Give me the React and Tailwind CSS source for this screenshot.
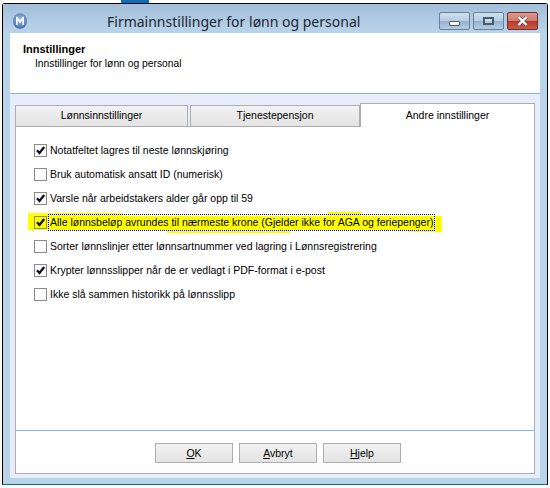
const options = [
  { label: 'Notatfeltet lagres til neste lønnskjøring', checked: true },
  { label: 'Bruk automatisk ansatt ID (numerisk)', checked: false },
  { label: 'Varsle når arbeidstakers alder går opp til 59', checked: true },
  { label: 'Alle lønnsbeløp avrundes til nærmeste krone (Gjelder ikke for AGA og feriepenger)', checked: true, marked: true },
  { label: 'Sorter lønnslinjer etter lønnsartnummer ved lagring i Lønnsregistrering', checked: false },
  { label: 'Krypter lønnsslipper når de er vedlagt i PDF-format i e-post', checked: true },
  { label: 'Ikke slå sammen historikk på lønnsslipp', checked: false },
];

function Logo() {
  return (
    <svg width="14" height="16" viewBox="0 0 14 16" className="shrink-0">
      <defs>
        <radialGradient id="orb" cx="50%" cy="40%" r="65%">
          <stop offset="0%" stopColor="#9db6dc" />
          <stop offset="75%" stopColor="#5a7fb8" />
          <stop offset="100%" stopColor="#2a4684" />
        </radialGradient>
      </defs>
      <ellipse cx="7" cy="8" rx="7" ry="7.8" fill="url(#orb)" />
      <path d="M3 12V3.8h1.7L7 7.2l2.3-3.4H11V12H9.3V7.4L7 10.4 4.7 7.4V12z" fill="#f2f6fc" />
    </svg>
  );
}

// the marker stroke over the fourth row is not a clean rectangle
function Highlight() {
  return (
    <>
      <div className="absolute left-[-6px] top-[6px] w-[414px] h-[14px] bg-[#ffff00]" />
      <div className="absolute left-[-6px] top-[3px] w-[95px] h-[16px] bg-[#ffff00]" />
      <div className="absolute left-[294px] top-[2px] w-[34px] h-[8px] bg-[#ffff00]" />
      <div className="absolute left-[133px] top-[16px] w-[123px] h-[7px] bg-[#ffff00]" />
      <div className="absolute left-[374px] top-[16px] w-[34px] h-[6px] bg-[#ffff00]" />
    </>
  );
}

function CheckRow({ label, checked, marked }) {
  return (
    <div className="h-6 flex items-center relative">
      {marked && <Highlight />}
      <span className={`relative w-[13px] h-[13px] shrink-0 border border-[#8a8a8a] flex items-center justify-center ${marked ? '' : 'bg-white'}`}>
        {checked && (
          <svg width="11" height="11" viewBox="0 0 11 11">
            <path d="M2 5.2l2.5 2.8L9.2 2" fill="none" stroke="#10141f" strokeWidth="2.4" />
          </svg>
        )}
      </span>
      <span className={`relative ml-[1px] px-[2px] h-[17px] leading-[17px] whitespace-nowrap ${marked ? 'outline-1 outline-dotted outline-offset-[-1px] outline-black' : ''}`}>
        {label}
      </span>
    </div>
  );
}

function CaptionButton({ className, children }) {
  return (
    <div className={`w-[31px] h-[18px] rounded-[2px] border flex items-center justify-center ${className}`}>
      {children}
    </div>
  );
}

function DialogButton({ hot, rest }) {
  return (
    <button className="w-[78px] h-5 border border-[#adadad] bg-gradient-to-b from-[#f2f2f2] to-[#e3e3e3] text-black leading-none">
      <span className="underline">{hot}</span>{rest}
    </button>
  );
}

export default function App() {
  const blueCaption = 'border-[#66809c] bg-[linear-gradient(#d0e0ef_0%,#b7cde2_48%,#96b3cf_52%,#b4cce2_100%)]';
  return (
    <div className="w-[550px] h-[488px] bg-white overflow-hidden relative text-[10.5px] text-black font-['Liberation_Sans',sans-serif]">
      {/* bits of the desktop behind the window */}
      <div className="absolute left-[121px] top-0 w-[28px] h-[3px] bg-[#0f6cb8]" />
      <div className="absolute left-0 top-0 w-[2px] h-[488px] bg-[#faf7ee]" />

      <div className="absolute left-[2px] top-[3px] w-[546px] h-[482px] border border-black border-b-[#0b6f78] rounded-t-[3px] bg-[#b9d3ea] flex flex-col">
        <div className="h-[29px] shrink-0 flex items-start pt-[9px] pl-[10px] pr-[9px] bg-gradient-to-b from-[#a3bfd9] to-[#b9d3ea]">
          <Logo />
          <div className="ml-[80px] mt-[-1px] text-[14px] leading-[20px] whitespace-nowrap text-[#1c2733] font-['Noto_Sans',sans-serif]">
            Firmainnstillinger for lønn og personal
          </div>
          <div className="ml-auto mt-[-1px] flex gap-[3px]">
            <CaptionButton className={blueCaption}>
              <div className="w-[11px] h-[5px] mt-[5px] bg-white border border-[#4a5a6c] rounded-[1px]" />
            </CaptionButton>
            <CaptionButton className={blueCaption}>
              <div className="w-[11px] h-[8px] bg-white/30 border-2 border-[#4a5a6c]" />
            </CaptionButton>
            <CaptionButton className="border-[#6e2f2a] bg-[linear-gradient(#dd9a8e_0%,#d07b6c_48%,#b63a28_52%,#c9594a_100%)]">
              <svg width="13" height="10" viewBox="0 0 13 10">
                <path d="M2.5 1l8 8M10.5 1l-8 8" stroke="#5a4a48" strokeWidth="3.6" />
                <path d="M2.5 1l8 8M10.5 1l-8 8" stroke="#fff" strokeWidth="2.4" />
              </svg>
            </CaptionButton>
          </div>
        </div>

        <div className="mx-[7px] h-[445px] bg-white flex flex-col shrink-0">
          <div className="h-[61px] shrink-0 border-b border-[#8eb0e8] pt-[9px] pl-[13px]">
            <div className="font-bold text-[11px] leading-[14px]">Innstillinger</div>
            <div className="pl-[12px] text-[10.3px] leading-[16px]">Innstillinger for lønn og personal</div>
          </div>

          <div className="flex-1 bg-[#e6edfb] px-[5px] pt-[9px] pb-[4px] flex flex-col">
            <div className="flex h-[23px] items-end shrink-0">
              <div className="w-[173px] h-[21px] border border-b-0 border-[#adadad] bg-gradient-to-b from-[#f2f2f2] to-[#e3e3e3] flex items-center justify-center">
                Lønnsinnstillinger
              </div>
              <div className="ml-[2px] w-[170px] h-[21px] border border-b-0 border-[#adadad] bg-gradient-to-b from-[#f2f2f2] to-[#e3e3e3] flex items-center justify-center">
                Tjenestepensjon
              </div>
              <div className="w-[175px] h-[24px] border border-b-0 border-[#adadad] bg-white flex items-center justify-center relative z-10 mb-[-1px]">
                Andre innstillinger
              </div>
            </div>

            <div className="flex-1 border border-[#adadad] bg-white flex flex-col">
              <div className="flex-1 pl-[18px] pt-[11px]">
                {options.map((o) => (
                  <CheckRow key={o.label} {...o} />
                ))}
              </div>
              <div className="h-[43px] shrink-0 border-t border-[#8eb0e8] pt-[12px] pl-[139px] flex gap-[6px]">
                <DialogButton hot="O" rest="K" />
                <DialogButton hot="A" rest="vbryt" />
                <DialogButton hot="H" rest="jelp" />
              </div>
            </div>
          </div>
        </div>
      </div>
    </div>
  );
}
